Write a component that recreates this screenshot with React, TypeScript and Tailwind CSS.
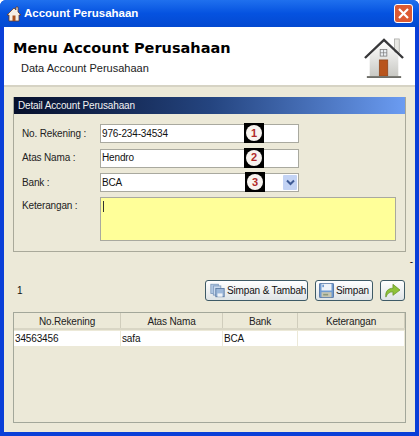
const Badge = ({ n, x }: { n: string; x: string }) => (
  <div className={`absolute top-[-2px] ${x} flex h-[20px] w-[20px] items-center justify-center bg-black`}>
    <div className="flex h-[16px] w-[16px] items-center justify-center rounded-full bg-[#f8f4f0] text-[11px] font-bold leading-none tracking-normal text-[#b02a2a]">
      {n}
    </div>
  </div>
);

const Row = ({ label, value, n, x, combo }: { label: string; value: string; n: string; x: string; combo?: boolean }) => (
  <div className="flex h-[19px] items-center">
    <div className="w-[86px] pl-[8px] text-[#222]">{label}</div>
    <div className="relative flex h-[19px] w-[199px] items-center border border-[#a9a99f] bg-white pl-[1px] text-[#111]">
      {value}
      <Badge n={n} x={x} />
      {combo && (
        <div className="absolute right-[1px] top-[1px] flex h-[15px] w-[14px] items-center justify-center rounded-[1px] bg-[#c3d3f4]">
          <svg width="9" height="7" viewBox="0 0 9 7"><path d="M1 1.5 L4.5 5 L8 1.5" fill="none" stroke="#3f5b96" strokeWidth="2" /></svg>
        </div>
      )}
    </div>
  </div>
);

const HouseSmall = () => (
  <svg width="16" height="16" viewBox="0 0 16 16">
    <path d="M8 2 L1 9 L3 9 L3 15 L13 15 L13 9 L15 9 L12 6 L12 1 L10 1 L10 4 Z" fill="#f4efe6" stroke="#6b3b22" strokeWidth="0.8" />
    <rect x="6.5" y="9.5" width="3" height="5.5" fill="#a9521f" />
  </svg>
);

const HouseBig = () => (
  <svg width="40" height="42" viewBox="0 0 42 44">
    <defs>
      <linearGradient id="wall" x1="0" y1="0" x2="0" y2="1">
        <stop offset="0" stopColor="#ffffff" />
        <stop offset="1" stopColor="#c9c9c4" />
      </linearGradient>
    </defs>
    <rect x="32" y="2" width="5" height="14" fill="#e8e8e4" stroke="#a8a8a4" strokeWidth="0.8" />
    <path d="M21 4 L6 20 L6 41 L36 41 L36 20 Z" fill="url(#wall)" />
    <path d="M1 22 L21 3 L41 22" fill="none" stroke="#38383a" strokeWidth="2.5" />
    <rect x="17" y="13" width="7" height="7" fill="#e9eef2" stroke="#777" strokeWidth="0.8" />
    <path d="M20.5 13 V20 M17 16.5 H24" stroke="#777" strokeWidth="0.7" />
    <rect x="16" y="24" width="9" height="17" fill="#b8541c" stroke="#7d3a16" strokeWidth="0.6" />
    <rect x="3" y="41" width="36" height="2" fill="#6e6e68" />
  </svg>
);

const CopyIcon = () => (
  <svg width="15" height="15" viewBox="0 0 18 17" className="shrink-0">
    <rect x="1" y="1" width="9" height="11" fill="#b5cbe6" stroke="#7d99bd" />
    <rect x="4" y="3" width="9" height="11" fill="#c9d9ee" stroke="#7d99bd" />
    <rect x="7" y="6" width="10" height="10" fill="#9db8da" stroke="#56769f" />
    <rect x="9" y="12" width="6" height="4" fill="#eef2f7" />
  </svg>
);

const SaveIcon = () => (
  <svg width="15" height="15" viewBox="0 0 18 18" className="shrink-0">
    <rect x="0.5" y="0.5" width="17" height="17" rx="1" fill="#6f9bd1" stroke="#44689a" />
    <rect x="3" y="1" width="12" height="8" fill="#eef3f9" />
    <rect x="4" y="2" width="2" height="3" fill="#6f9bd1" />
    <rect x="3" y="11" width="12" height="6" fill="#c6c6b4" />
    <rect x="5" y="13" width="6" height="2" fill="#8c9a7c" />
  </svg>
);

const ArrowIcon = () => (
  <svg width="17" height="15" viewBox="0 0 19 17">
    <path d="M2 16 C1 9 5 6 10 6 L10 1.5 L18 8 L10 14 L10 10 C6 10 3.5 12 2 16 Z" fill="#8fc23a" stroke="#5f8f20" strokeWidth="0.8" />
  </svg>
);

const btn = "flex h-[21px] items-center whitespace-nowrap rounded-[3px] border border-[#3e5a66] bg-gradient-to-b from-white to-[#dfe4e6] text-[#111]";

const cols = [
  { name: "No.Rekening", w: "w-[107px]", v: "34563456" },
  { name: "Atas Nama", w: "w-[102px]", v: "safa" },
  { name: "Bank", w: "w-[75px]", v: "BCA" },
  { name: "Keterangan", w: "flex-1", v: "" },
];

export default function App() {
  return (
    <div className="flex h-[436px] w-[419px] flex-col overflow-hidden rounded-t-[6px] bg-[#0a3fd8] font-['Liberation_Sans',sans-serif] text-[10px] leading-none tracking-[-0.15px]">
      <div className="flex h-[27px] shrink-0 items-center bg-gradient-to-b from-[#1f70ee] via-[#0552e0] to-[#0349d0] pl-[6px] pr-[6px]">
        <HouseSmall />
        <div className="ml-[2px] text-[11.5px] font-bold tracking-normal text-white">Account Perusahaan</div>
        <div className="ml-auto flex h-[19px] w-[19px] items-center justify-center rounded-[3px] border border-white bg-[#dc5a33]">
          <svg width="11" height="11" viewBox="0 0 11 11"><path d="M1 1 L10 10 M10 1 L1 10" stroke="#fff" strokeWidth="2.2" /></svg>
        </div>
      </div>

      <div className="mx-[4px] mb-[4px] flex min-h-0 flex-1 flex-col bg-[#ece9d8]">
        <div className="flex h-[60px] shrink-0 justify-between border-b-2 border-[#d6d3c4] bg-white">
          <div className="pl-[9px] pt-[12px]">
            <div className="font-['DejaVu_Sans',sans-serif] text-[14.5px] font-bold leading-[18px] tracking-normal text-black">Menu Account Perusahaan</div>
            <div className="mt-[6px] pl-[8px] text-[11px] tracking-normal text-[#222]">Data Account Perusahaan</div>
          </div>
          <div className="mr-[11px] mt-[10px]"><HouseBig /></div>
        </div>

        <div className="mx-[9px] mt-[10px] h-[155px] shrink-0 border-x border-b border-[#a9a99a]">
          <div className="flex h-[17px] items-center bg-gradient-to-r from-[#07102c] via-[#24447f] to-[#6b9cf2] pl-[4px] text-[#f2f2f2]">Detail Account Perusahaan</div>
          <div className="flex flex-col gap-[5.5px] pt-[10px]">
            <Row label="No. Rekening :" value="976-234-34534" n="1" x="left-[143px]" />
            <Row label="Atas Nama :" value="Hendro" n="2" x="left-[143px]" />
            <Row label="Bank :" value="BCA" n="3" x="left-[144px]" combo />
            <div className="-mt-[0.5px] flex">
              <div className="w-[86px] pl-[8px] pt-[4px] text-[#222]">Keterangan :</div>
              <div className="h-[44px] w-[296px] border border-[#a9a99f] bg-[#ffff99] pl-[2px] pt-[3px]">
                <div className="h-[11px] w-[1px] bg-[#333]" />
              </div>
            </div>
          </div>
        </div>

        <div className="mt-[5px] flex h-[10px] justify-end pr-[2px] text-[#111]">-</div>

        <div className="mt-[13px] flex h-[21px] items-center pl-[13px] pr-[10px]">
          <div className="text-[#111]">1</div>
          <div className={`${btn} ml-auto w-[103px] gap-[2px] pl-[4px]`}><CopyIcon />Simpan &amp; Tambah</div>
          <div className={`${btn} ml-[7px] w-[58px] gap-[2px] pl-[3px]`}><SaveIcon />Simpan</div>
          <div className={`${btn} ml-[7px] w-[25px] justify-center`}><ArrowIcon /></div>
        </div>

        <div className="mx-[9px] mt-[11px] h-[111px] border border-[#a3a79a]">
          <div className="flex h-[17px] border-b-2 border-[#d9d6c5] bg-[#ece9d8] text-[#222]">
            {cols.map((c) => (
              <div key={c.name} className={`${c.w} flex items-center justify-center border-r border-[#d0cdbc] pt-[2px]`}>{c.name}</div>
            ))}
          </div>
          <div className="mt-[1px] flex h-[15px] bg-white text-[#111]">
            {cols.map((c) => (
              <div key={c.name} className={`${c.w} flex items-center border-r border-[#ece9d8] pl-[1px]`}>{c.v}</div>
            ))}
          </div>
        </div>
      </div>
    </div>
  );
}
